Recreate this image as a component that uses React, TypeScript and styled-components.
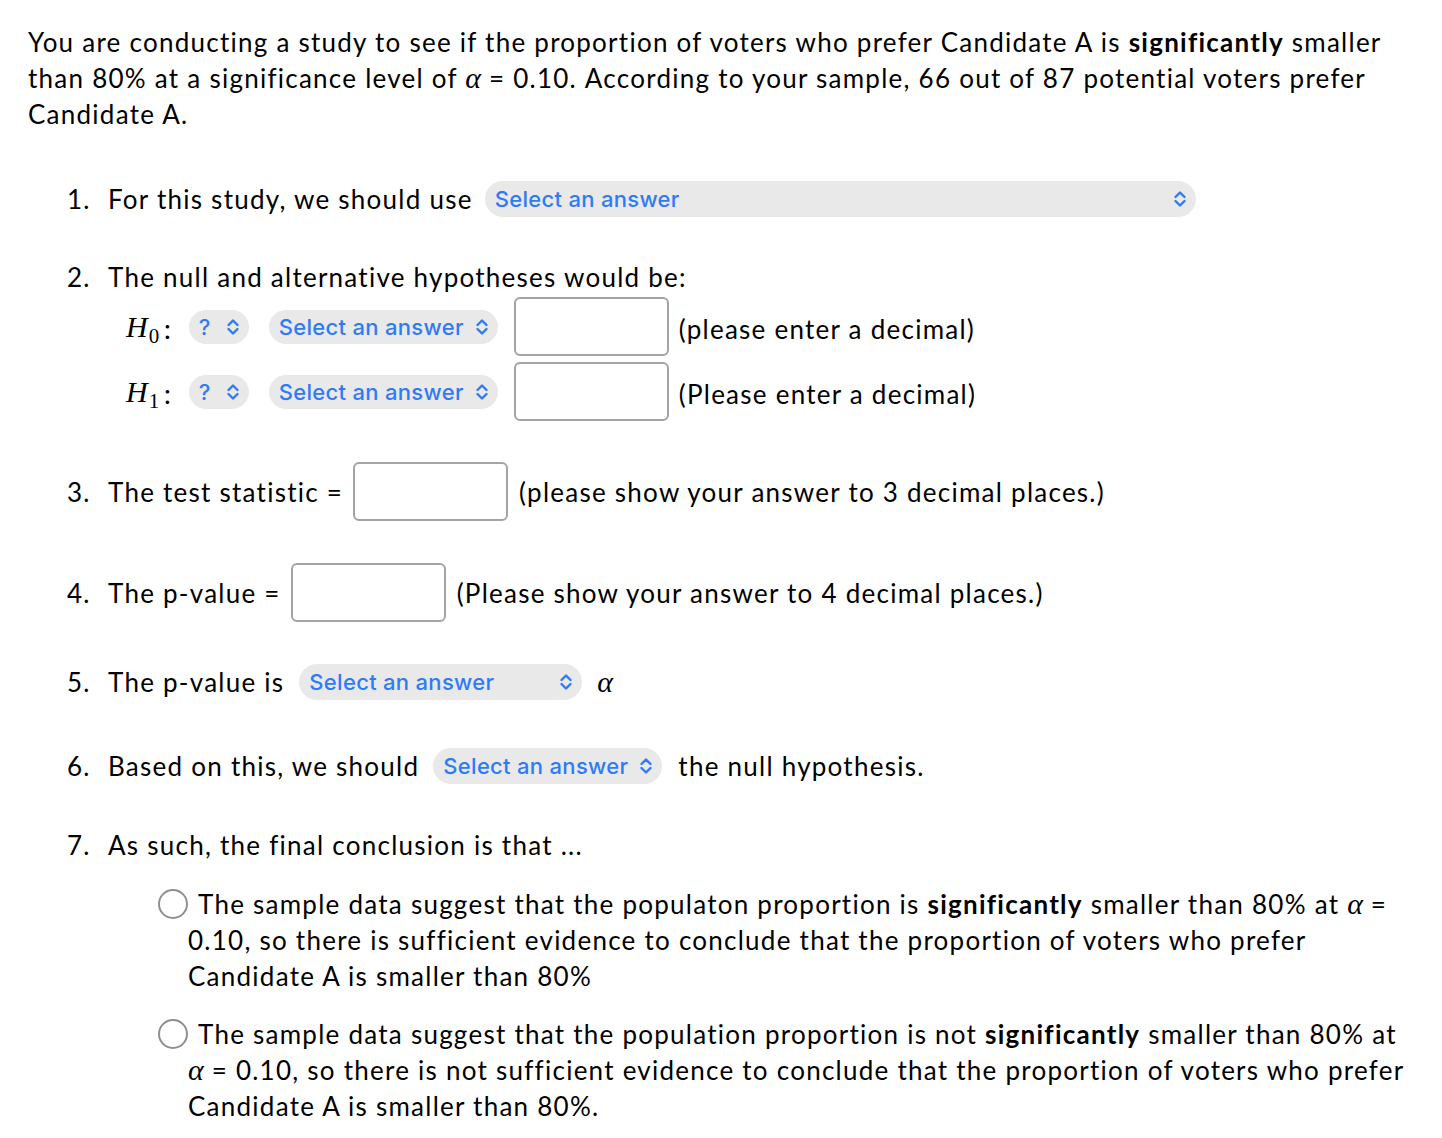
import React from "react";
import styled, { createGlobalStyle } from "styled-components";

const Global = createGlobalStyle`
  html, body { margin: 0; padding: 0; background: #fff; }
  body { font-family: Lato, "Noto Sans", sans-serif; color: #000; }
`;

const Page = styled.div`
  padding: 24px 28px 20px 28px;
  font-size: 26px;
  line-height: 36px;
  letter-spacing: 1.25px;
`;

const Intro = styled.p`
  margin: 0;
  width: 1372px;
`;

const List = styled.div`
  display: flex;
  flex-direction: column;
  margin-left: 39px;
`;

const Item = styled.div<{ $mt: number }>`
  display: flex;
  align-items: flex-start;
  margin-top: ${(p) => p.$mt}px;
`;

const Num = styled.div<{ $h?: number }>`
  width: 41px;
  flex: none;
  height: ${(p) => (p.$h ? p.$h : 36)}px;
  display: flex;
  align-items: center;
`;

const Body = styled.div`
  flex: 1;
  min-width: 0;
`;

const Row = styled.div<{ $h?: number }>`
  display: flex;
  align-items: center;
  height: ${(p) => (p.$h ? p.$h : 36)}px;
  white-space: pre;
`;

const HRow = styled(Row)`
  margin-left: 18px;
  margin-top: 2px;
  & + & { margin-top: 6px; }
`;

const HText = styled.span`
  padding-top: 5px;
`;

const Pill = styled.div<{ $w: number; $h?: number; $ml: number; $mr?: number }>`
  display: inline-flex;
  align-items: center;
  justify-content: space-between;
  box-sizing: border-box;
  width: ${(p) => p.$w}px;
  height: ${(p) => (p.$h ? p.$h : 36)}px;
  margin-left: ${(p) => p.$ml}px;
  margin-right: ${(p) => (p.$mr ? p.$mr : 0)}px;
  padding: 0 9px 0 10px;
  background: #e9e9e9;
  border-radius: 18px;
  color: #2f7bf5;
  font-family: Inter, Roboto, sans-serif;
  font-weight: 500;
  font-size: 22px;
  letter-spacing: 0.3px;
  line-height: 1;
  flex: none;
`;

const Chevron = styled.svg`
  width: 14px;
  height: 18px;
  flex: none;
`;

const Box = styled.div<{ $ml: number; $mr: number }>`
  box-sizing: border-box;
  width: 155px;
  height: 59px;
  border: 2px solid #a3a3a3;
  border-radius: 6px;
  background: #fff;
  margin-left: ${(p) => p.$ml}px;
  margin-right: ${(p) => p.$mr}px;
  flex: none;
`;

const MathVar = styled.span`
  font-family: "Liberation Serif", "DejaVu Serif", serif;
  font-style: italic;
  font-size: 30px;
  letter-spacing: 0;
  padding-top: 4px;
`;

const Sub = styled.span`
  font-style: normal;
  font-size: 21px;
  position: relative;
  top: 6px;
  margin-left: 1px;
`;

const Colon = styled.span`
  font-family: "Liberation Serif", serif;
  font-size: 30px;
  margin-left: 4px;
  padding-top: 4px;
`;

const Alpha = styled.span<{ $ml?: number }>`
  font-family: "Liberation Serif", "DejaVu Serif", serif;
  font-style: italic;
  font-size: 30px;
  letter-spacing: 0;
  margin-left: ${(p) => (p.$ml ? p.$ml : 0)}px;
`;

const Options = styled.div`
  margin-top: 23px;
  margin-left: 160px;
  display: flex;
  flex-direction: column;
  gap: 22px;
`;

const Option = styled.div`
  text-indent: -30px;
  width: 1230px;
`;

const RadioWrap = styled.span`
  display: inline-flex;
  align-items: center;
  text-indent: 0;
  width: 40px;
  height: 36px;
  vertical-align: top;
`;

const Radio = styled.span`
  display: block;
  box-sizing: border-box;
  width: 30px;
  height: 30px;
  border: 2px solid #8f8f8f;
  border-radius: 50%;
  background: #fff;
`;

const ChevronIcon = () => (
  <Chevron viewBox="0 0 14 18">
    <path
      d="M2.5 7 L7 2.5 L11.5 7 M2.5 11 L7 15.5 L11.5 11"
      fill="none"
      stroke="#2f7bf5"
      strokeWidth="2.4"
      strokeLinecap="round"
      strokeLinejoin="round"
    />
  </Chevron>
);

const Select = ({
  w,
  ml,
  mr,
  label = "Select an answer",
  h,
}: {
  w: number;
  ml: number;
  mr?: number;
  label?: string;
  h?: number;
}) => (
  <Pill $w={w} $ml={ml} $mr={mr} $h={h}>
    <span>{label}</span>
    <ChevronIcon />
  </Pill>
);

export default function App() {
  return (
    <>
      <Global />
      <Page>
        <Intro>
          You are conducting a study to see if the proportion of voters who prefer Candidate A is{" "}
          <b>significantly</b> smaller than 80% at a significance level of <Alpha>α</Alpha> = 0.10.
          According to your sample, 66 out of 87 potential voters prefer Candidate A.
        </Intro>
        <List>
          <Item $mt={49}>
            <Num>1.</Num>
            <Body>
              <Row>
                For this study, we should use
                <Select w={711} ml={12} />
              </Row>
            </Body>
          </Item>
          <Item $mt={42}>
            <Num>2.</Num>
            <Body>
              <Row>The null and alternative hypotheses would be:</Row>
              <HRow $h={59}>
                <MathVar>
                  H<Sub>0</Sub>
                </MathVar>
                <Colon>:</Colon>
                <Select w={60} ml={16} label="?" h={34} />
                <Select w={229} ml={20} h={34} />
                <Box $ml={16} $mr={10} />
                <HText>(please enter a decimal)</HText>
              </HRow>
              <HRow $h={59}>
                <MathVar>
                  H<Sub>1</Sub>
                </MathVar>
                <Colon>:</Colon>
                <Select w={60} ml={16} label="?" h={34} />
                <Select w={229} ml={20} h={34} />
                <Box $ml={16} $mr={10} />
                <HText>(Please enter a decimal)</HText>
              </HRow>
            </Body>
          </Item>
          <Item $mt={41}>
            <Num $h={59}>3.</Num>
            <Body>
              <Row $h={59}>
                The test statistic =
                <Box $ml={10} $mr={11} />
                (please show your answer to 3 decimal places.)
              </Row>
            </Body>
          </Item>
          <Item $mt={42}>
            <Num $h={59}>4.</Num>
            <Body>
              <Row $h={59}>
                The p-value =
                <Box $ml={10} $mr={11} />
                (Please show your answer to 4 decimal places.)
              </Row>
            </Body>
          </Item>
          <Item $mt={42}>
            <Num>5.</Num>
            <Body>
              <Row>
                The p-value is
                <Select w={283} ml={15} />
                <Alpha $ml={15}>α</Alpha>
              </Row>
            </Body>
          </Item>
          <Item $mt={48}>
            <Num>6.</Num>
            <Body>
              <Row>
                Based on this, we should
                <Select w={229} ml={14} mr={16} />
                the null hypothesis.
              </Row>
            </Body>
          </Item>
          <Item $mt={43}>
            <Num>7.</Num>
            <Body>
              <Row>As such, the final conclusion is that ...</Row>
            </Body>
          </Item>
        </List>
        <Options>
          <Option>
            <RadioWrap>
              <Radio />
            </RadioWrap>
            The sample data suggest that the populaton proportion is <b>significantly</b> smaller
            than 80% at <Alpha>α</Alpha> = 0.10, so there is sufficient evidence to conclude that the
            proportion of voters who prefer Candidate A is smaller than 80%
          </Option>
          <Option>
            <RadioWrap>
              <Radio />
            </RadioWrap>
            The sample data suggest that the population proportion is not <b>significantly</b>{" "}
            smaller than 80% at <Alpha>α</Alpha> = 0.10, so there is not sufficient evidence to
            conclude that the proportion of voters who prefer Candidate A is smaller than 80%.
          </Option>
        </Options>
      </Page>
    </>
  );
}
